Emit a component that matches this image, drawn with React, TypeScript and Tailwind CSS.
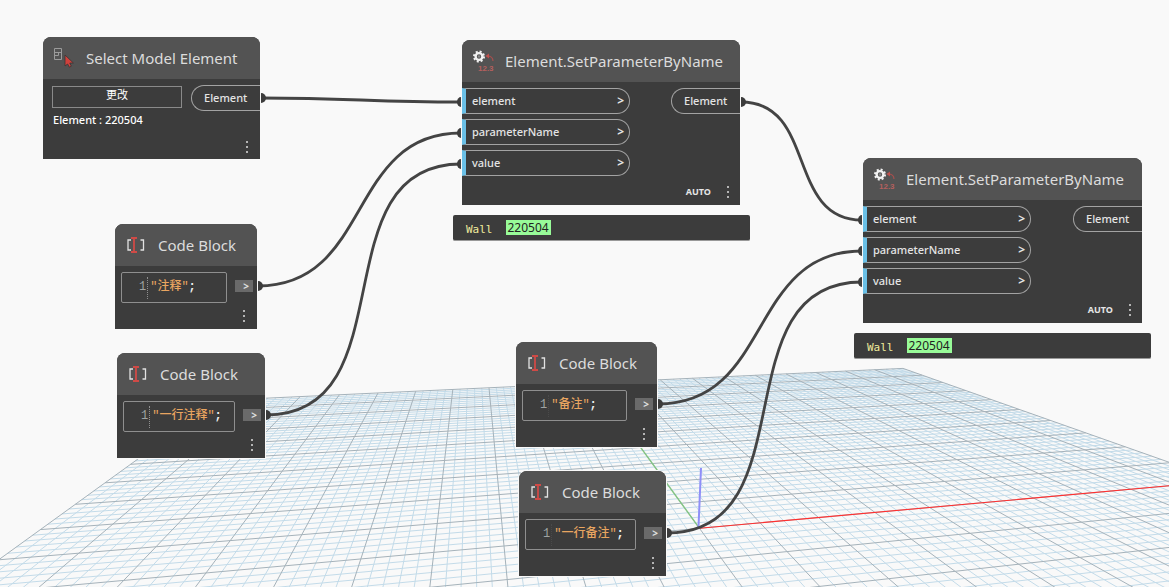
import { useState } from 'react';
import type { ReactNode } from 'react';

type Point = { x: number; y: number };

// Ground plane -> screen, one unit is one major cell
const project = (u: number, v: number): Point => {
  const w = 1 + 0.01795 * u + 0.0875 * v;
  return {
    x: (699.5 + 74.2 * u + 41.37 * v) / w,
    y: (528.3 + 3.9 * u + 18.96 * v) / w,
  };
};

const segment = (u1: number, v1: number, u2: number, v2: number) => {
  const a = project(u1, v1);
  const b = project(u2, v2);
  return `M${a.x.toFixed(1)} ${a.y.toFixed(1)}L${b.x.toFixed(1)} ${b.y.toFixed(1)}`;
};

const SIZE = 10;
const NEAR = -5;
const minorLines: string[] = [];
const majorLines: string[] = [];

for (let i = -SIZE * 5; i <= SIZE * 5; i++) {
  const target = i % 5 === 0 ? majorLines : minorLines;
  target.push(segment(i / 5, NEAR, i / 5, SIZE));
  if (i / 5 >= NEAR) target.push(segment(-SIZE, i / 5, SIZE, i / 5));
}

const wires: { from: Point; to: Point }[] = [
  { from: { x: 261, y: 98 }, to: { x: 461, y: 102 } },
  { from: { x: 258, y: 286 }, to: { x: 461, y: 133 } },
  { from: { x: 266, y: 415 }, to: { x: 461, y: 164 } },
  { from: { x: 741, y: 102 }, to: { x: 862, y: 220 } },
  { from: { x: 658, y: 404 }, to: { x: 862, y: 251 } },
  { from: { x: 667, y: 533 }, to: { x: 862, y: 282 } },
];

function GroundGrid() {
  return (
    <svg className="absolute inset-0 w-full h-full" fill="none" aria-hidden="true">
      <path d={minorLines.join('')} stroke="#c3dbe9" strokeWidth="1" />
      <path d={majorLines.join('')} stroke="#a5b2ba" strokeWidth="1" />
      <path d={segment(0, 0, SIZE, 0)} stroke="#ff3030" strokeWidth="1.1" />
      <path d={segment(0, 0, 0, SIZE)} stroke="#84c584" strokeWidth="1.4" />
      <path d="M698.5 527L701 468" stroke="#8f8ff8" strokeWidth="2" />
    </svg>
  );
}

function Wires() {
  return (
    <svg className="absolute inset-0 w-full h-full pointer-events-none" aria-hidden="true">
      {wires.map(({ from, to }) => {
        const bend = 0.45 * Math.hypot(to.x - from.x, to.y - from.y);
        return (
          <g key={`${from.x}-${from.y}`}>
            <path
              d={`M${from.x} ${from.y}C${from.x + bend} ${from.y} ${to.x - bend} ${to.y} ${to.x} ${to.y}`}
              fill="none"
              stroke="#444"
              strokeWidth="2.8"
            />
            <path d={`M${from.x} ${from.y - 5}a5 5 0 0 1 0 10z`} fill="#3c3c3c" />
            <path d={`M${to.x} ${to.y - 5}a4 5 0 0 0 0 10z`} fill="#3c3c3c" />
          </g>
        );
      })}
    </svg>
  );
}

function SelectIcon() {
  return (
    <svg width="22" height="22" viewBox="0 0 22 22" fill="none" aria-hidden="true">
      <path d="M1.5 1.500h7v11h-7zM1.500 5.500h7M1.500 8.500h4v-3" stroke="#9b9b9b" />
      <path d="M12 8v11l2.600-2 1.700 3.200 2-1-1.500-3.200h3.600z" fill="#d0413c" stroke="#3b3333" strokeWidth="0.8" />
    </svg>
  );
}

function ParameterIcon() {
  return (
    <svg width="22" height="22" viewBox="0 0 22 22" fill="none" aria-hidden="true">
      <circle cx="7" cy="6.500" r="3.400" stroke="#f2f2f2" strokeWidth="2.400" />
      <circle cx="7" cy="6.500" r="5" stroke="#f2f2f2" strokeWidth="2" strokeDasharray="2 1.927" />
      <circle cx="7" cy="6.500" r="1.200" fill="#8a8a8a" />
      <path d="M15 6c4 0 6 2 6 5" stroke="#a94f4d" strokeWidth="1.2" />
      <path d="M17 3.500L13.500 6l3.500 2.500z" fill="#c0504d" />
      <text x="6" y="20.500" fill="#b5605e" fontSize="8" fontWeight="bold" fontFamily="Liberation Sans, sans-serif">
        12.3
      </text>
    </svg>
  );
}

function CodeIcon() {
  return (
    <svg width="22" height="18" viewBox="0 0 22 18" fill="none" aria-hidden="true">
      <path d="M6 4H3v10h3M15.500 4h3v10h-3" stroke="#e2e2e2" strokeWidth="1.300" />
      <path d="M6 2h6M6 16h6M9 2v14" stroke="#cf4a46" strokeWidth="1.800" />
    </svg>
  );
}

function MoreButton() {
  return (
    <button type="button" aria-label="Node options" className="flex flex-col gap-[3px] px-1">
      <span className="size-[2px] bg-[#b5b5b5]" />
      <span className="size-[2px] bg-[#b5b5b5]" />
      <span className="size-[2px] bg-[#b5b5b5]" />
    </button>
  );
}

function Node({ place, icon, title, children }: { place: string; icon: ReactNode; title: string; children: ReactNode }) {
  return (
    <section className={`absolute flex flex-col rounded-t-lg bg-[#3c3c3c] ring-1 ring-[#f9f9f9] ${place}`}>
      <header className="flex h-[42px] items-center rounded-t-lg bg-[#535353] pl-[10px]">
        {icon}
        <h2 className="ml-[11px] whitespace-nowrap pb-px text-[15px] leading-5 text-[#dcdcdc]">{title}</h2>
      </header>
      {children}
    </section>
  );
}

function OutputPort() {
  return (
    <div className="flex h-[26px] w-[69px] items-center rounded-l-[13px] border border-r-0 border-[#a3a3a3] pl-3 text-[11px] font-medium text-[#e4e4e4]">
      Element
    </div>
  );
}

function SetParameterNode({ place }: { place: string }) {
  return (
    <Node place={place} icon={<ParameterIcon />} title="Element.SetParameterByName">
      <div className="flex items-start justify-between pt-[6px]">
        <ul className="flex w-[168px] flex-col gap-[5px]">
          {['element', 'parameterName', 'value'].map((name) => (
            <li
              key={name}
              className="flex h-[26px] items-center justify-between rounded-r-[13px] border border-l-4 border-[#a3a3a3] border-l-[#6ac0e7] pr-[5px] pl-[6px] text-[11px] font-medium text-[#e4e4e4]"
            >
              {name}
              <button type="button" aria-label={`${name} options`} className="text-xs font-bold">
                &gt;
              </button>
            </li>
          ))}
        </ul>
        <OutputPort />
      </div>
      <footer className="flex h-[29px] items-center justify-end gap-3 pt-[3px] pr-[7px] text-[9px] font-bold text-[#e6e6e6]">
        AUTO
        <MoreButton />
      </footer>
    </Node>
  );
}

function WatchPreview({ place }: { place: string }) {
  return (
    <div className={`absolute flex h-[26px] w-[297px] items-center gap-[13px] rounded-xs border-b border-[#999] bg-[#3c3c3c] pl-[13px] ${place}`}>
      <span className="pt-[5px] font-['DejaVu_Sans_Mono',monospace] text-[11px] leading-4 text-[#f0eb9c]">Wall</span>
      <span className="bg-[#98fb98] px-[2px] text-xs leading-[15px] text-[#222]">220504</span>
    </div>
  );
}

function CodeBlock({ place, gutter, code }: { place: string; gutter: string; code: string }) {
  const [value, setValue] = useState(code);

  return (
    <Node place={place} icon={<CodeIcon />} title="Code Block">
      <div className="flex gap-2 pt-[6px] pr-1 pl-[6px]">
        <div className="flex h-[31px] flex-1 rounded-xs border border-[#8f8f8f] pt-1 pl-[17px] font-['Liberation_Mono','Noto_Sans_CJK_SC',monospace] text-xs leading-5">
          <span className={`h-[22px] border-r border-dotted pr-px text-[#9fa3a3] ${gutter}`}>1</span>
          <input
            aria-label="Code"
            value={value}
            onChange={(e) => setValue(e.target.value)}
            className="field-sizing-content h-5 bg-transparent pl-[2px] font-medium text-[#e8a560] outline-none"
          />
          <span className="font-bold text-[#f0f0f0]">;</span>
        </div>
        <button
          type="button"
          aria-label="Output"
          className="mt-2 flex h-3 w-[18px] items-center justify-end bg-[#6a6a6a] pr-1 text-[10px] font-bold text-[#e0e0e0]"
        >
          &gt;
        </button>
      </div>
      <footer className="flex h-[26px] items-center justify-end pr-2">
        <MoreButton />
      </footer>
    </Node>
  );
}

export default function App() {
  return (
    <main className="relative min-h-screen overflow-hidden bg-[#f9f9f9] font-['Noto_Sans','Noto_Sans_CJK_SC',sans-serif]">
      <GroundGrid />
      <Wires />

      <Node place="left-[43px] top-[37px] w-[217px]" icon={<SelectIcon />} title="Select Model Element">
        <div className="flex items-start justify-between pt-[6px] pl-[9px]">
          <button type="button" className="mt-px h-[22px] w-[130px] border border-[#8a8a8a] pb-1 text-[11px] leading-4 text-white">
            更改
          </button>
          <OutputPort />
        </div>
        <p className="pt-px pl-[10px] text-[11px] leading-4 font-medium text-white">Element : 220504</p>
        <footer className="flex h-[31px] items-center justify-end pt-[6px] pr-2">
          <MoreButton />
        </footer>
      </Node>

      <SetParameterNode place="left-[462px] top-[40px] w-[278px]" />
      <WatchPreview place="left-[453px] top-[215px]" />

      <SetParameterNode place="left-[863px] top-[158px] w-[279px]" />
      <WatchPreview place="left-[854px] top-[333px]" />

      <CodeBlock place="left-[115px] top-[224px] w-[142px]" gutter="border-[#8f8f8f]" code={'"注释"'} />
      <CodeBlock place="left-[117px] top-[353px] w-[148px]" gutter="border-[#8f8f8f]" code={'"一行注释"'} />
      <CodeBlock place="left-[516px] top-[342px] w-[141px]" gutter="border-[#4a4a4a]" code={'"备注"'} />
      <CodeBlock place="left-[519px] top-[471px] w-[147px]" gutter="border-[#4a4a4a]" code={'"一行备注"'} />
    </main>
  );
}
